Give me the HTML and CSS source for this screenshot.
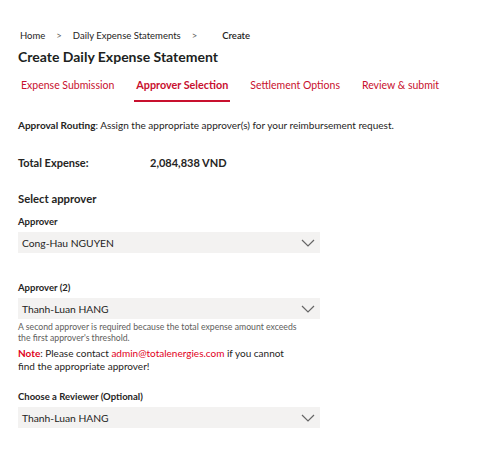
FILE: index.html
```html
<!DOCTYPE html>
<html lang="en">
  <head>
    <meta charset="UTF-8" />
    <meta name="viewport" content="width=device-width, initial-scale=1.0" />
    <title>Create Daily Expense Statement</title>
    <link rel="stylesheet" href="styles.css">
  </head>
  <body>
    <div id="page">
      <nav class="breadcrumb">
        <span>Home</span>
        <span class="sep">&gt;</span>
        <span>Daily Expense Statements</span>
        <span class="sep">&gt;</span>
        <span class="current">Create</span>
      </nav>
      <h1>Create Daily Expense Statement</h1>

      <div class="tabs">
        <div class="tab">Expense Submission</div>
        <div class="tab active">Approver Selection</div>
        <div class="tab">Settlement Options</div>
        <div class="tab">Review &amp; submit</div>
      </div>

      <p class="intro"><b>Approval Routing</b>: Assign the appropriate approver(s) for your reimbursement request.</p>

      <div class="total">
        <span class="totalLabel">Total Expense:</span>
        <span class="totalValue">2,084,838 VND</span>
      </div>

      <h2>Select approver</h2>

      <div class="field">
        <label>Approver</label>
        <div class="select">
          <span>Cong-Hau NGUYEN</span>
          <svg width="14" height="8" viewBox="0 0 14 8"><path d="M1 1 L7 7 L13 1" fill="none" stroke="#666" stroke-width="1.2"/></svg>
        </div>
      </div>

      <div class="field second">
        <label>Approver (2)</label>
        <div class="select">
          <span>Thanh-Luan HANG</span>
          <svg width="14" height="8" viewBox="0 0 14 8"><path d="M1 1 L7 7 L13 1" fill="none" stroke="#666" stroke-width="1.2"/></svg>
        </div>
        <p class="hint">A second approver is required because the total expense amount exceeds the first approver's threshold.</p>
        <p class="note"><span class="noteLabel">Note</span>: Please contact <span class="mail">admin@totalenergies.com</span> if you cannot find the appropriate approver!</p>
      </div>

      <div class="field reviewer">
        <label>Choose a Reviewer (Optional)</label>
        <div class="select">
          <span>Thanh-Luan HANG</span>
          <svg width="14" height="8" viewBox="0 0 14 8"><path d="M1 1 L7 7 L13 1" fill="none" stroke="#666" stroke-width="1.2"/></svg>
        </div>
      </div>
    </div>
  </body>
</html>
```

FILE: styles.css
```css
body {
  margin: 0;
  font-family: "Segoe UI", Lato, sans-serif;
  color: #252423;
  background: #fff;
}

#page {
  padding: 28px 0 0 18px;
}

.breadcrumb {
  display: flex;
  align-items: center;
  font-size: 9.5px;
  line-height: 16px;
  padding-left: 2px;
  white-space: nowrap;
}

.breadcrumb .sep {
  color: #605e5c;
  margin: 0 11px;
}

.breadcrumb .current {
  margin-left: 14px;
  font-weight: 600;
}

h1 {
  font-size: 14px;
  line-height: 20px;
  font-weight: 700;
  margin: 3px 0 0 0;
  color: #201f1e;
}

.tabs {
  display: flex;
  gap: 22px;
  margin-top: 6px;
  padding-left: 3px;
  white-space: nowrap;
}

.tab {
  font-size: 10.5px;
  line-height: 16px;
  color: #c8102e;
  padding: 4px 0 9px 0;
}

.tab.active {
  font-size: 10.8px;
  font-weight: 700;
  border-bottom: 2px solid #c8102e;
  margin: 0 -2px;
  padding: 4px 2px 7px 2px;
}

.intro {
  font-size: 10px;
  line-height: 15px;
  margin: 16px 0 0 0;
}

.total {
  display: flex;
  font-size: 11px;
  line-height: 15px;
  font-weight: 700;
  margin-top: 22px;
}

.totalLabel {
  width: 132px;
}

h2 {
  font-size: 11.3px;
  line-height: 16px;
  font-weight: 700;
  margin: 21px 0 0 0;
}

.field {
  width: 302px;
  margin-top: 8px;
}

.field label {
  display: block;
  font-size: 9.5px;
  line-height: 14px;
  font-weight: 700;
  margin-bottom: 3px;
}

.select {
  display: flex;
  justify-content: space-between;
  align-items: center;
  height: 21px;
  background: #f3f2f1;
  padding: 0 5px 0 4px;
  font-size: 10.3px;
}

.field.second {
  margin-top: 28px;
}

.hint {
  font-size: 8.7px;
  color: #605e5c;
  margin: 2px 0 0 0;
  line-height: 11px;
  max-width: 290px;
}

.note {
  font-size: 10px;
  margin: 4px 0 0 0;
  line-height: 13px;
  max-width: 280px;
}

.noteLabel {
  color: #e1001a;
  font-weight: 700;
}

.mail {
  color: #e1001a;
}

.field.reviewer {
  margin-top: 17px;
}
```
